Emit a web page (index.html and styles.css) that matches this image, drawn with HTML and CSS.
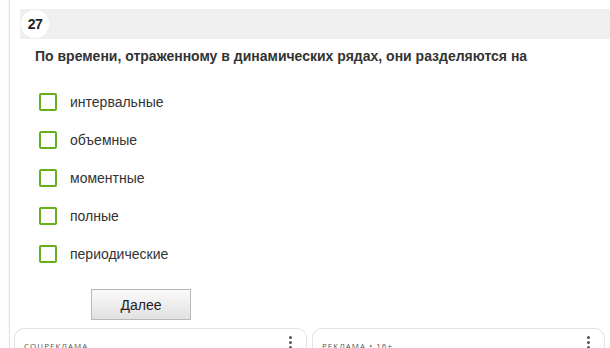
FILE: index.html
```html
<!DOCTYPE html>
<html lang="ru">
<head>
<meta charset="utf-8">
<link rel="stylesheet" href="styles.css">
</head>
<body>
<div class="page">
  <div class="qhead"><span class="qnum">27</span></div>
  <div class="qtext">По времени, отраженному в динамических рядах, они разделяются на</div>
  <ul class="options">
    <li class="opt"><span class="box"></span><span class="label">интервальные</span></li>
    <li class="opt"><span class="box"></span><span class="label">объемные</span></li>
    <li class="opt"><span class="box"></span><span class="label">моментные</span></li>
    <li class="opt"><span class="box"></span><span class="label">полные</span></li>
    <li class="opt"><span class="box"></span><span class="label">периодические</span></li>
  </ul>
  <div class="actions"><button class="next">Далее</button></div>
  <div class="ads">
    <div class="ad"><span class="adlabel">СОЦРЕКЛАМА</span><span class="dots"><i></i><i></i><i></i></span></div>
    <div class="ad"><span class="adlabel">РЕКЛАМА • 16+</span><span class="dots"><i></i><i></i><i></i></span></div>
  </div>
</div>
</body>
</html>
```

FILE: styles.css
```css
html, body {
  margin: 0;
  padding: 0;
  background: #fff;
  overflow: hidden;
}
body {
  font-family: "Liberation Sans", Arial, sans-serif;
  color: #333;
  height: 348px;
}
.page {
  margin-left: 9px;
  border-left: 1px solid #e3e3e3;
  box-shadow: -1px 0 2px rgba(0,0,0,0.04);
  height: 348px;
  padding-top: 9px;
  box-sizing: border-box;
  overflow: hidden;
}
.qhead {
  margin-left: 10px;
  height: 30px;
  background: #efefef;
  display: flex;
  align-items: center;
}
.qnum {
  width: 28px;
  height: 28px;
  margin-left: 1px;
  border-radius: 50%;
  background: #fff;
  display: flex;
  align-items: center;
  justify-content: center;
  font-weight: bold;
  font-size: 14px;
  color: #222;
  letter-spacing: -0.5px;
}
.qtext {
  margin: 9px 0 0 25px;
  font-size: 14px;
  font-weight: bold;
  line-height: 16px;
  color: #333;
}
.options {
  list-style: none;
  margin: 29px 0 0 29px;
  padding: 0;
  display: flex;
  flex-direction: column;
  gap: 20px;
}
.opt {
  display: flex;
  align-items: center;
  height: 18px;
}
.box {
  width: 18px;
  height: 18px;
  box-sizing: border-box;
  border: 2px solid #66b01c;
  border-radius: 2px;
  background: #fff;
}
.label {
  margin-left: 13px;
  font-size: 14px;
  color: #333;
}
.actions {
  margin: 26px 0 0 81px;
}
.next {
  width: 100px;
  height: 31px;
  border: 1px solid #b8b8b8;
  border-radius: 0;
  background: linear-gradient(#fafafa, #e1e1e1);
  font-family: "Liberation Sans", Arial, sans-serif;
  font-size: 14px;
  color: #222;
  padding: 0;
}
.ads {
  margin: 8px 0 0 4px;
  display: flex;
  gap: 5px;
}
.ad {
  width: 293px;
  height: 40px;
  box-sizing: border-box;
  border: 1px solid #e2e2e2;
  border-radius: 10px;
  position: relative;
  padding: 9px 0 0 9px;
  line-height: 11px;
}
.adlabel {
  font-family: "Open Sans", "Liberation Sans", sans-serif;
  font-size: 8px;
  letter-spacing: 1px;
  color: #555;
}
.dots {
  position: absolute;
  right: 14px;
  top: 7px;
  display: flex;
  flex-direction: column;
  gap: 2px;
}
.dots i {
  width: 3px;
  height: 3px;
  border-radius: 50%;
  background: #555;
}
```
